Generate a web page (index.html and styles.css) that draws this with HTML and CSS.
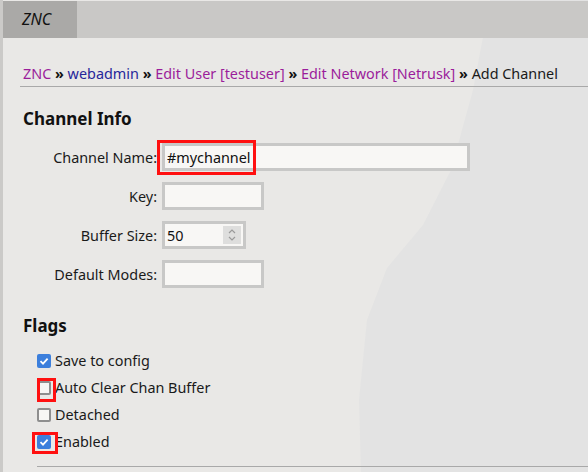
FILE: index.html
```html
<!DOCTYPE html>
<html>
<head>
<meta charset="utf-8">
<link rel="stylesheet" href="styles.css">
</head>
<body>
<div class="page">
  <header class="topbar">
    <div class="tab">ZNC</div>
  </header>
  <main class="content">
    <nav class="crumbs">
      <a class="visited" href="#">ZNC</a> <b>»</b> <a class="link" href="#">webadmin</a> <b>»</b> <a class="visited" href="#">Edit User [testuser]</a> <b>»</b> <a class="visited" href="#">Edit Network [Netrusk]</a> <b>»</b> <span>Add Channel</span>
    </nav>

    <h3 class="section-title">Channel Info</h3>
    <div class="form">
      <label class="lbl">Channel Name:</label>
      <div class="field hl-wrap">
        <input class="txt w-wide" type="text" value="#mychannel">
        <span class="hl hl-name"></span>
      </div>

      <label class="lbl">Key:</label>
      <div class="field"><input class="txt w-mid" type="text"></div>

      <label class="lbl">Buffer Size:</label>
      <div class="field">
        <div class="num">
          <input class="num-input" type="text" value="50">
          <span class="spin">
            <svg width="10" height="14" viewBox="0 0 10 14"><path d="M2 5 L5 2 L8 5 M2 9 L5 12 L8 9" fill="none" stroke="#9a9a9a" stroke-width="1.2"/></svg>
          </span>
        </div>
      </div>

      <label class="lbl">Default Modes:</label>
      <div class="field"><input class="txt w-mid" type="text"></div>
    </div>

    <h3 class="section-title flags-title">Flags</h3>
    <ul class="flags">
      <li><span class="cb checked"><svg viewBox="0 0 14 14" width="14" height="14"><path d="M3.5 7.2 L6 9.6 L10.6 4.6" fill="none" stroke="#fff" stroke-width="1.8"/></svg></span>Save to config</li>
      <li><span class="cb hl-wrap"><span class="hl hl-auto"></span></span>Auto Clear Chan Buffer</li>
      <li><span class="cb"></span>Detached</li>
      <li><span class="cb checked hl-wrap"><svg viewBox="0 0 14 14" width="14" height="14"><path d="M3.5 7.2 L6 9.6 L10.6 4.6" fill="none" stroke="#fff" stroke-width="1.8"/></svg><span class="hl hl-enabled"></span></span>Enabled</li>
    </ul>
    <div class="rule"></div>
  </main>
</div>
</body>
</html>
```

FILE: styles.css
```css
html, body {
  margin: 0;
  padding: 0;
  height: 100%;
}
body {
  font-family: "Noto Sans", "Open Sans", sans-serif;
  font-size: 14.4px;
  color: #1a1a1a;
  background: #cbcac8;
  overflow: hidden;
}
.page {
  margin-left: 3px;
  height: 472px;
  background-color: #e9e8e6;
  background-image: url("data:image/svg+xml,%3Csvg xmlns='http://www.w3.org/2000/svg' width='585' height='472'%3E%3Cpath d='M487 0 L470 90 L448 170 L420 225 L384 268 L364 320 L356 400 L358 472 L585 472 L585 0 Z' fill='%23e3e3e3'/%3E%3C/svg%3E");
  background-repeat: no-repeat;
  display: flex;
  flex-direction: column;
}
.topbar {
  height: 37px;
  margin-top: 1px;
  background: #c9c8c6;
  display: flex;
}
.tab {
  width: 55px;
  padding-left: 19px;
  background: #aaa9a7;
  font-style: italic;
  font-size: 16px;
  line-height: 37px;
  color: #111;
}
.content {
  padding-left: 20px;
  flex: 1;
}
.crumbs {
  margin-top: 26px;
  padding: 0 0 2px 3px;
  margin-left: -3px;
  line-height: 20px;
  border-bottom: 1px solid #a9a9a9;
  white-space: nowrap;
}
.crumbs a { text-decoration: none; }
.crumbs .visited { color: #9b1d9b; }
.crumbs .link { color: #26269a; }
.crumbs b { color: #111; }
.section-title {
  margin: 20px 0 0;
  font-size: 17px;
  line-height: 24px;
  font-weight: bold;
  color: #111;
}
.form {
  display: grid;
  grid-template-columns: 134px auto;
  column-gap: 5px;
  row-gap: 11px;
  margin-top: 12px;
  align-items: center;
}
.lbl {
  text-align: right;
  color: #1a1a1a;
}
.field {
  display: flex;
  height: 28px;
}
.hl-wrap { position: relative; }
.txt, .num {
  box-sizing: border-box;
  height: 28px;
  border: 3px solid #c8c8c7;
  background: #f8f7f5;
  font-family: "Noto Sans", "Open Sans", sans-serif;
  font-size: 14.4px;
  color: #111;
  padding: 0 2px;
  outline: none;
  margin: 0;
}
.w-wide { width: 308px; }
.w-mid { width: 102px; }
.num {
  width: 84px;
  display: flex;
  align-items: center;
  padding-right: 2px;
}
.num-input {
  border: 0;
  background: transparent;
  width: 50px;
  font-family: "Noto Sans", "Open Sans", sans-serif;
  font-size: 14.4px;
  color: #111;
  padding: 0;
  outline: none;
  flex: 1;
}
.spin {
  width: 18px;
  height: 18px;
  background: #dededd;
  display: flex;
  align-items: center;
  justify-content: center;
}
.hl {
  position: absolute;
  border: 3px solid #ff1010;
  box-sizing: border-box;
  pointer-events: none;
}
.hl-name { left: -5px; top: -3px; width: 99px; height: 35px; }
.hl-auto { left: -2px; top: -5px; width: 19px; height: 24px; }
.hl-enabled { left: -5px; top: -3px; width: 26px; height: 22px; }
.flags-title { margin-top: 26px; }
.flags {
  list-style: none;
  margin: 9px 0 0;
  padding: 0 0 0 14px;
}
.flags li {
  height: 27px;
  display: flex;
  align-items: center;
}
.cb {
  box-sizing: border-box;
  width: 14px;
  height: 14px;
  margin-right: 4px;
  border: 2px solid #8e8e8e;
  border-radius: 2px;
  background: #f7f6f4;
  flex: none;
}
.cb.checked {
  border: 0;
  background: #3c7fdc;
}
.cb svg { display: block; }
.rule {
  margin: 11px 0 0 14px;
  border-top: 1px solid #a9a9a9;
}
```
